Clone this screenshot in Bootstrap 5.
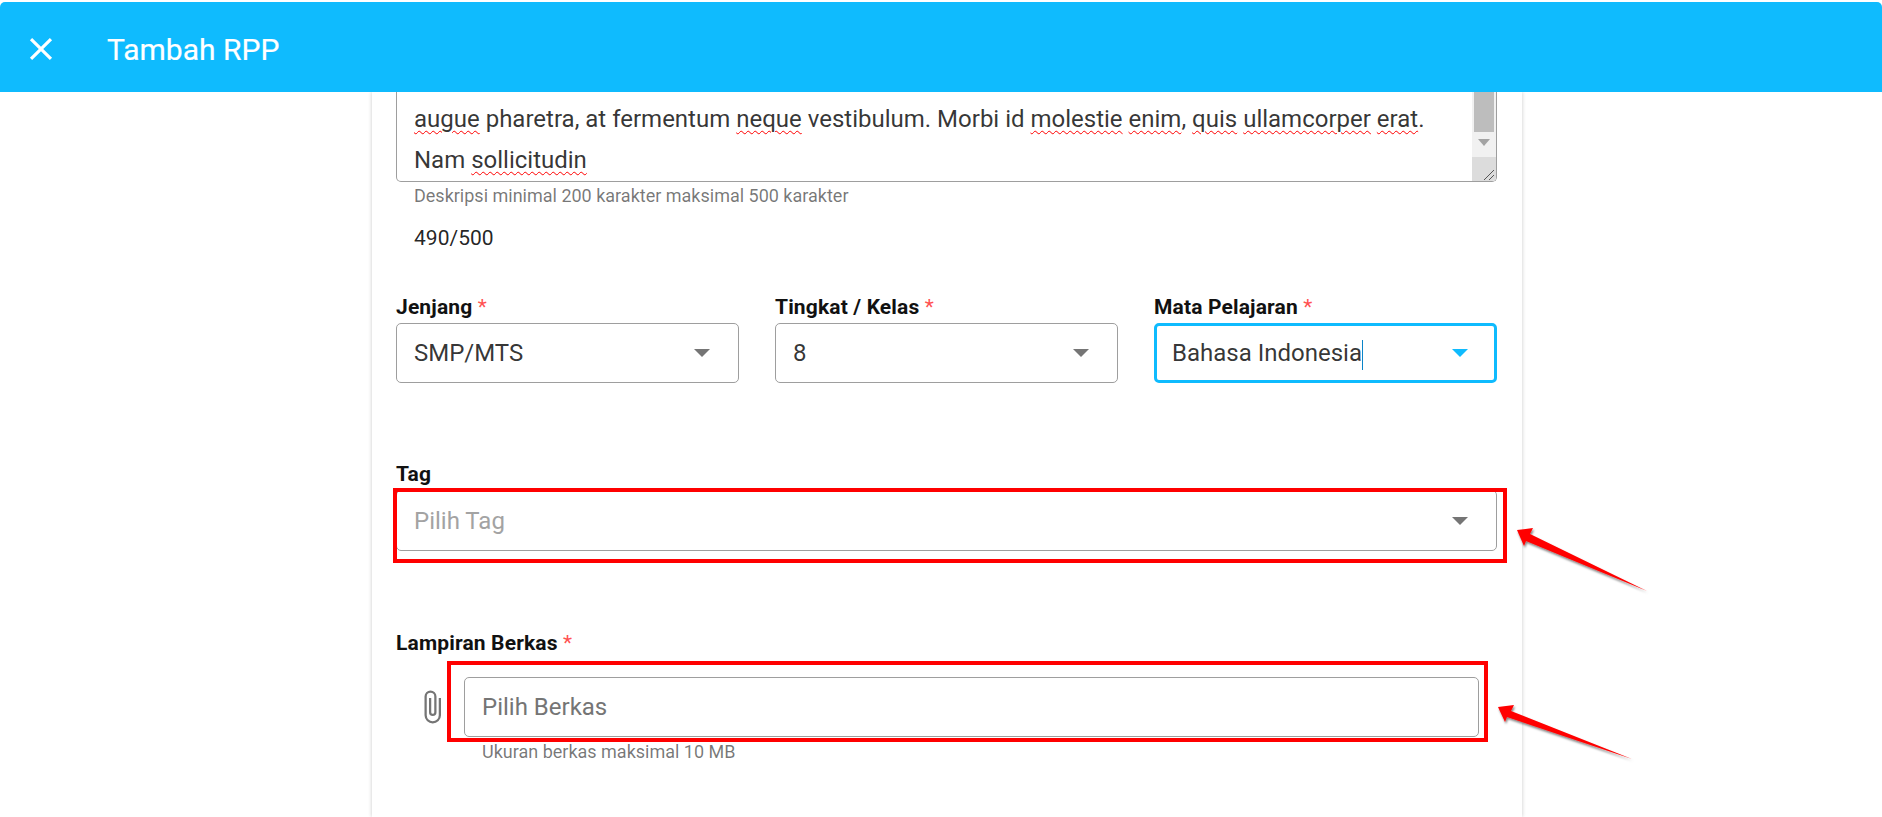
<!DOCTYPE html>
<html lang="id">
<head>
<meta charset="utf-8">
<title>Tambah RPP</title>
<link href="https://cdn.jsdelivr.net/npm/bootstrap@5.3.0/dist/css/bootstrap.min.css" rel="stylesheet">
<style>
html,body{height:100%;overflow:hidden;background:#fff;}
body{font-family:Roboto,"Liberation Sans",sans-serif;color:rgba(0,0,0,.87);position:relative;padding-top:2px;}
.topbar{height:90px;background:#0fbbfe;color:#fff;border-radius:5px 5px 0 0;padding:3px 0 0 22px;position:relative;z-index:2;}
.topbar svg{width:38px;height:38px;fill:#fff;margin-right:47px;flex:none;}
.topbar-title{font-size:30px;font-weight:400;line-height:1;padding-top:2px;-webkit-text-stroke:.2px #fff;}
.sheet{width:1150px;height:725px;margin-left:372px;padding:0 25px 0 24px;box-shadow:0 0 4px rgba(0,0,0,.22);overflow:hidden;}
.notes{height:90px;border:1px solid #9e9e9e;border-top:0;border-radius:0 0 5px 5px;padding:0 0 0 17px;position:relative;font-size:24px;line-height:41px;color:rgba(0,0,0,.8);white-space:nowrap;overflow:hidden;}
.notes p{margin:7px 0 0 0;}
.notes p + p{margin-top:0;}
.spell{text-decoration:underline wavy #f00;text-decoration-thickness:1.2px;text-underline-offset:3px;}
.rail{position:absolute;right:0;top:0;width:24px;height:90px;background:#f1f1f1;}
.rail-thumb{height:40px;margin:0 2px;background:#bdbdbd;}
.rail-arrow{width:0;height:0;margin:7px auto 0;border-left:6px solid transparent;border-right:6px solid transparent;border-top:7px solid #a3a3a3;}
.rail-corner{position:absolute;left:0;right:0;bottom:0;height:25px;background:#dcdcdc;}
.rail-corner svg{position:absolute;right:1px;bottom:1px;}
.hint{font-size:18px;line-height:20px;color:rgba(0,0,0,.54);}
.hint-top{padding-left:18px;margin-top:4px;}
.counter{font-size:21px;line-height:24px;padding-left:18px;margin-top:20px;letter-spacing:.02px;}
.fields{--bs-gutter-x:36px;--bs-gutter-y:0;margin-top:45px;}
.fld-label{font-size:21px;font-weight:700;line-height:24px;color:#111;margin-bottom:4px;letter-spacing:.15px;}
.req{color:#ff5252;font-weight:400;}
.fld{height:60px;border:1px solid #9e9e9e;border-radius:5px;padding:0 17px;font-size:24px;color:rgba(0,0,0,.8);background:#fff;}
.fld-tall{height:61px;}
.fld-on{border:3px solid #0fbbfe;padding:0 15px;}
.fld-caret{display:inline-block;width:1px;height:30px;background:#0a84c8;vertical-align:middle;}
.tri{width:0;height:0;border-left:8px solid transparent;border-right:8px solid transparent;border-top:8px solid #757575;margin-right:11px;}
.fld-on .tri{border-top-color:#0fbbfe;}
.ph-light{color:#a3a3a3;}
.ph-dark{color:#757575;}
.block-tag{margin-top:79px;}
.block-file{margin-top:80px;}
.clip{width:36px;height:36px;fill:#757575;margin-left:18px;margin-right:14px;flex:none;}
.file-row{margin-top:22px;}
.fld-file{margin-right:18px;}
.hint-file{padding-left:86px;margin-top:5px;}
.marks{position:absolute;left:0;top:0;z-index:3;pointer-events:none;}
</style>
</head>
<body>
<header class="topbar d-flex align-items-center">
  <svg viewBox="0 0 24 24" aria-hidden="true"><path d="M19,6.41L17.59,5L12,10.59L6.41,5L5,6.41L10.59,12L5,17.59L6.41,19L12,13.41L17.59,19L19,17.59L13.41,12L19,6.41Z"/></svg>
  <div class="topbar-title">Tambah RPP</div>
</header>
<main class="sheet">
  <div class="notes">
    <p><span class="spell">augue</span> pharetra, at fermentum <span class="spell">neque</span> vestibulum. Morbi id <span class="spell">molestie</span> <span class="spell">enim</span>, <span class="spell">quis</span> <span class="spell">ullamcorper</span> <span class="spell">erat</span>.</p>
    <p>Nam <span class="spell">sollicitudin</span></p>
    <div class="rail">
      <div class="rail-thumb"></div>
      <div class="rail-arrow"></div>
      <div class="rail-corner"><svg width="14" height="14" viewBox="0 0 14 14"><path d="M13 3L3 13M13 8L8 13" stroke="#555" stroke-width="1" fill="none"/></svg></div>
    </div>
  </div>
  <div class="hint hint-top">Deskripsi minimal 200 karakter maksimal 500 karakter</div>
  <div class="counter">490/500</div>

  <div class="row fields">
    <div class="col-4">
      <div class="fld-label">Jenjang <span class="req">*</span></div>
      <div class="fld d-flex align-items-center justify-content-between"><span>SMP/MTS</span><span class="tri"></span></div>
    </div>
    <div class="col-4">
      <div class="fld-label">Tingkat / Kelas <span class="req">*</span></div>
      <div class="fld d-flex align-items-center justify-content-between"><span>8</span><span class="tri"></span></div>
    </div>
    <div class="col-4">
      <div class="fld-label">Mata Pelajaran <span class="req">*</span></div>
      <div class="fld fld-on d-flex align-items-center justify-content-between"><span>Bahasa Indonesia<span class="fld-caret"></span></span><span class="tri"></span></div>
    </div>
  </div>

  <div class="block-tag">
    <div class="fld-label">Tag</div>
    <div class="fld fld-tall d-flex align-items-center justify-content-between"><span class="ph-light">Pilih Tag</span><span class="tri"></span></div>
  </div>

  <div class="block-file">
    <div class="fld-label">Lampiran Berkas <span class="req">*</span></div>
    <div class="file-row d-flex align-items-center">
      <svg class="clip" viewBox="0 0 24 24" aria-hidden="true"><path d="M16.5,6V17.5A4,4 0 0,1 12.5,21.5A4,4 0 0,1 8.5,17.5V5A2.5,2.5 0 0,1 11,2.5A2.5,2.5 0 0,1 13.5,5V15.5A1,1 0 0,1 12.5,16.5A1,1 0 0,1 11.5,15.5V6H10V15.5A2.5,2.5 0 0,0 12.5,18A2.5,2.5 0 0,0 15,15.5V5A4,4 0 0,0 11,1A4,4 0 0,0 7,5V17.5A5.5,5.5 0 0,0 12.5,23A5.5,5.5 0 0,0 18,17.5V6H16.5Z"/></svg>
      <div class="fld fld-file flex-grow-1 d-flex align-items-center"><span class="ph-dark">Pilih Berkas</span></div>
    </div>
    <div class="hint hint-file">Ukuran berkas maksimal 10 MB</div>
  </div>
</main>

<svg class="marks" width="1882" height="817" viewBox="0 0 1882 817" aria-hidden="true">
  <defs><filter id="arrowShade" x="-20%" y="-20%" width="140%" height="150%"><feDropShadow dx="1" dy="2" stdDeviation="1.2" flood-color="#000" flood-opacity=".5"/></filter></defs>
  <rect x="395" y="490" width="1110" height="71" fill="none" stroke="#f00" stroke-width="4"/>
  <rect x="449" y="663" width="1037" height="77" fill="none" stroke="#f00" stroke-width="4"/>
  <polygon points="1517,530 1533,528 1530,534 1647,591 1526,541 1524,546" fill="#f00" filter="url(#arrowShade)"/>
  <polygon points="1498,707 1514,705 1511,711 1632,759 1507,717 1505,722" fill="#f00" filter="url(#arrowShade)"/>
</svg>
<script src="https://cdn.jsdelivr.net/npm/bootstrap@5.3.0/dist/js/bootstrap.bundle.min.js"></script>
</body>
</html>
